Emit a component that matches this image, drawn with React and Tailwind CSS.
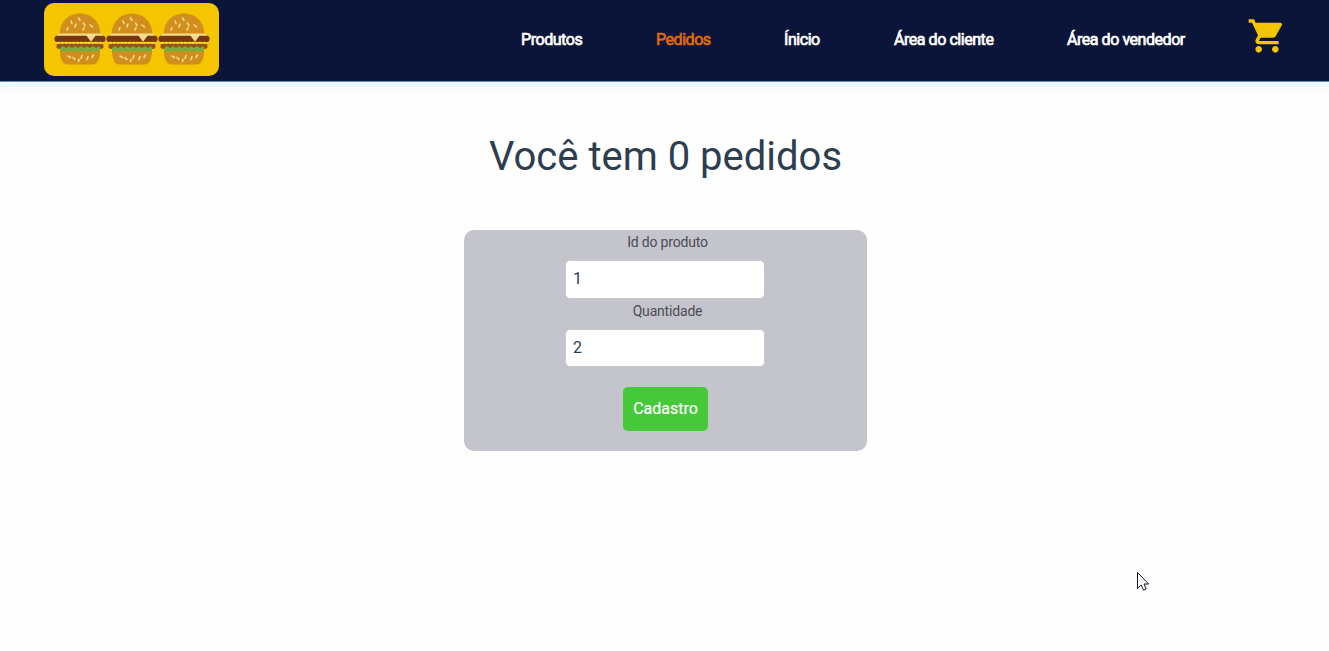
const seedsTop = [
  "M24.500 5l1.500 2.500", "M17 8l1 2.500", "M29.500 10l1.500 2.500", "M22 11l-1 3", "M36 12l2.500 2", "M14 14.500l-1 2.500", "M30 14.500l-1 2.500",
];
const seedsBottom = ["M14 43l2.500 1.500", "M19 44.500l2 2", "M28 42.500l-1 3", "M34 43.500l-1 3", "M39.500 42l-1.500 2.500", "M25 46.500l-.5 2"];

function Burger() {
  return (
    <svg viewBox="0 0 52 52" className="block h-[52px] w-[52px]">
      <path d="M5.500 21C6 9 14 .5 26 .5S46 9 46.500 21z" fill="#d28e1d" />
      <path d="M6 37h40c0 6-1.500 14.500-7 14.500H13C7.500 51.500 6 43 6 37z" fill="#d28e1d" />
      <path d="M4 20.500h44v3H4z" fill="#f5dc8c" />
      <rect x=".5" y="22.700" width="51" height="6.300" rx="2.800" fill="#76360f" />
      <path d="M32 22h10l-5 6.800z" fill="#f5dc8c" />
      <rect x="2.500" y="30.500" width="47" height="5.500" rx="2.700" fill="#965026" />
      <path d="M3 29.900H49" stroke="#f0d31b" strokeWidth="2.200" strokeDasharray="3 .8" />
      <path d="M6 38.500V35l3-2 3 2 3-2 3 2 3-2 3 2 3-2 3 2 3-2 3 2 3-2 3 2 3-2 1 2v3.500z" fill="#7bac3d" />
      <g stroke="#f5dc8c" strokeWidth="1.600" strokeLinecap="round" fill="none">
        {seedsTop.map((d) => <path key={d} d={d} />)}
        {seedsBottom.map((d) => <path key={d} d={d} />)}
      </g>
    </svg>
  );
}

function Field({ label, value, height }) {
  return (
    <label className="flex w-[200px] flex-col">
      <span className="h-[30px] pl-[6px] text-center text-sm leading-6 tracking-[-0.18px] text-[#4c4c55]">{label}</span>
      <input
        defaultValue={value}
        className={`w-full rounded-[5px] border border-[#c9c9cd] bg-white px-[7.5px] pb-[2px] text-base text-[#2c3e50] outline-none ${height}`}
      />
    </label>
  );
}

const link = "block whitespace-nowrap text-base leading-6 tracking-[-0.45px] [-webkit-text-stroke:0.7px_currentColor]";

export default function App() {
  return (
    <div className="min-h-[651px] bg-[#fefefe] font-['Roboto',sans-serif] text-[#2c3e50]">
      <header className="flex h-[82px] items-start justify-between border-b border-[#d96b0f] bg-[#0b1539] pr-[42px] pl-[44px] shadow-[0_4px_16px_rgba(0,0,0,0.06)]">
        <div className="mt-[3px] flex h-[73px] w-[175px] justify-center rounded-[10px] bg-[#f4c500] pt-[10px]">
          <Burger />
          <Burger />
          <Burger />
        </div>
        <nav className="flex pt-[28px] text-white">
          <a className={`${link} w-[135px]`}>Produtos</a>
          <a className={`${link} w-[128px] text-[#df6c08]`}>Pedidos</a>
          <a className={`${link} w-[110px]`}>Ínicio</a>
          <a className={`${link} w-[173px]`}>Área do cliente</a>
          <a className={`${link} w-[180px]`}>Área do vendedor</a>
          <svg viewBox="0 0 24 24" className="-mt-[12px] h-[40px] w-[40px] fill-[#f4c500]">
            <path d="M7 18c-1.100 0-1.990.9-1.990 2S5.900 22 7 22s2-.9 2-2-.9-2-2-2zM1 2v2h2l3.600 7.590-1.350 2.450c-.16.280-.25.610-.25.960 0 1.100.9 2 2 2h12v-2H7.420c-.14 0-.25-.11-.25-.25l.03-.12.900-1.630h7.450c.75 0 1.410-.41 1.750-1.030l3.580-6.490A1 1 0 0 0 20 4H5.210l-.94-2H1zm16 16c-1.100 0-1.990.9-1.990 2s.89 2 1.990 2 2-.9 2-2-.9-2-2-2z" />
          </svg>
        </nav>
      </header>
      <main className="flex flex-col items-center">
        <h1 className="mt-[45px] h-[60px] pl-[2px] text-[40px] leading-[60px]">Você tem 0 pedidos</h1>
        <form className="mt-[43px] ml-[2px] flex h-[221px] w-[403px] flex-col items-center rounded-[10px] bg-[#c4c4cc]">
          <div className="-ml-[2px] flex flex-col">
            <Field label="Id do produto" value="1" height="h-[39px]" />
            <Field label="Quantidade" value="2" height="h-[38px]" />
          </div>
          <button type="button" className="mt-[20px] h-[44px] w-[85px] rounded-[5px] bg-[#45c939] text-base text-white [-webkit-text-stroke:0.2px_currentColor]">
            Cadastro
          </button>
        </form>
      </main>
      <svg viewBox="0 0 13 20" className="absolute top-[572px] left-[1137px] h-[20px] w-[13px]">
        <path d="M.5.500v16l3.700-3.500 2.300 5.200 2.700-1.200L7 12h4.700z" fill="#fff" stroke="#15152f" strokeWidth="1" />
      </svg>
    </div>
  );
}
